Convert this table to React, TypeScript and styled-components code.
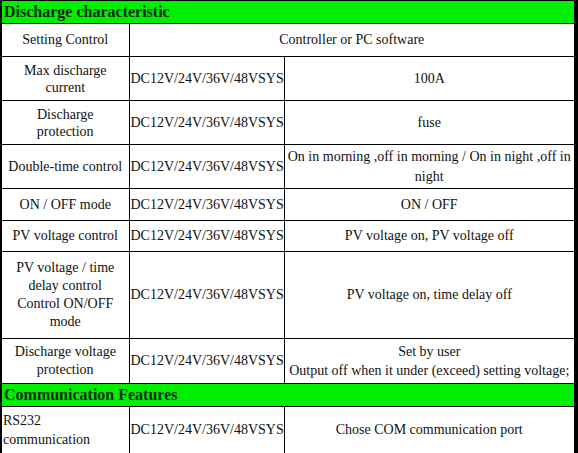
import React from "react";
import styled, { createGlobalStyle } from "styled-components";

const GlobalStyle = createGlobalStyle`
  html, body {
    margin: 0;
    padding: 0;
    background: #ffffff;
  }
  body {
    font-family: "Liberation Serif", "Times New Roman", serif;
    color: #111;
  }
`;

const Sheet = styled.table`
  width: 578px;
  border-collapse: collapse;
  table-layout: fixed;
  font-family: "Liberation Serif", "Times New Roman", serif;
  font-size: 14px;
  line-height: 18px;
  color: #111;
  border-left: 2px solid #000;
  border-right: 4px solid #000;
  border-bottom: 2px solid #000;
`;

const Row = styled.tr<{ $h: number }>`
  height: ${(p) => p.$h}px;
`;

const Section = styled.td`
  background: #00ee00;
  color: #0c2a0c;
  font-family: "Liberation Serif", "Times New Roman", serif;
  font-weight: bold;
  font-size: 16px;
  line-height: 20px;
  padding: 0 2px;
  text-align: left;
  border: 1px solid #000;
`;

const Cell = styled.td<{ $align?: "left" | "center"; $lh?: number }>`
  border: 1px solid #000;
  padding: 0 1px;
  font-family: "Liberation Serif", "Times New Roman", serif;
  text-align: ${(p) => p.$align ?? "center"};
  vertical-align: middle;
  line-height: ${(p) => (p.$lh ? `${p.$lh}px` : "18px")};
  overflow: hidden;
`;

const SYS = "DC12V/24V/36V/48VSYS";

type Item = {
  name: React.ReactNode;
  value: React.ReactNode;
  h: number;
  nameLh?: number;
  valueLh?: number;
};

const discharge: Item[] = [
  { name: <>Max discharge<br />current</>, value: "100A", h: 44, nameLh: 17 },
  { name: <>Discharge<br />protection</>, value: "fuse", h: 44, nameLh: 17 },
  {
    name: "Double-time control",
    value: "On in morning ,off in morning / On in night ,off in night",
    h: 44,
    valueLh: 20,
  },
  { name: "ON / OFF mode", value: "ON / OFF", h: 32 },
  { name: "PV voltage control", value: "PV voltage on, PV voltage off", h: 31 },
  {
    name: <>PV voltage / time<br />delay control<br />Control ON/OFF<br />mode</>,
    value: "PV voltage on, time delay off",
    h: 87,
  },
  {
    name: <>Discharge voltage<br />protection</>,
    value: <>Set by user<br />Output off when it under (exceed) setting voltage;</>,
    h: 45,
    valueLh: 19,
  },
];

export default function App() {
  return (
    <>
      <GlobalStyle />
      <Sheet>
        <colgroup>
          <col style={{ width: 128 }} />
          <col style={{ width: 155 }} />
          <col />
        </colgroup>
        <tbody>
          <Row $h={23}>
            <Section colSpan={3}>Discharge characteristic</Section>
          </Row>
          <Row $h={33}>
            <Cell>Setting Control</Cell>
            <Cell colSpan={2}>Controller or PC software</Cell>
          </Row>
          {discharge.map((item, i) => (
            <Row key={i} $h={item.h}>
              <Cell $lh={item.nameLh}>{item.name}</Cell>
              <Cell $align="left">{SYS}</Cell>
              <Cell $lh={item.valueLh}>{item.value}</Cell>
            </Row>
          ))}
          <Row $h={23}>
            <Section colSpan={3}>Communication Features</Section>
          </Row>
          <Row $h={47}>
            <Cell $align="left" $lh={19}>
              RS232
              <br />
              communication
            </Cell>
            <Cell $align="left">{SYS}</Cell>
            <Cell>Chose COM communication port</Cell>
          </Row>
        </tbody>
      </Sheet>
    </>
  );
}
